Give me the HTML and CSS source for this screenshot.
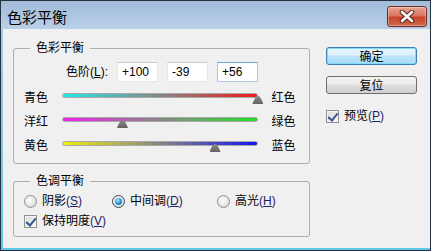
FILE: index.html
```html
<!DOCTYPE html>
<html lang="zh-CN">
<head>
    <meta charset="UTF-8">
    <title>色彩平衡</title>
    <link rel="stylesheet" href="styles.css">
</head>
<body>
    <div class="window">
        <div class="titlebar">
            <span class="title">色彩平衡</span>
            <button class="close-btn" title="关闭">
                <svg width="18" height="13" viewBox="0 0 18 13">
                    <path d="M4 2 L14 11 M14 2 L4 11" stroke="#5a2418" stroke-width="4.6" stroke-linecap="round"/>
                    <path d="M4 2 L14 11 M14 2 L4 11" stroke="#ffffff" stroke-width="2.6" stroke-linecap="round"/>
                </svg>
            </button>
        </div>
        <div class="frame">
            <div class="client">
                <div class="panes">
                    <div class="group balance">
                        <div class="group-title">色彩平衡</div>
                        <div class="levels">
                            <label class="levels-label">色阶(<u>L</u>):</label>
                            <input class="level-input" type="text" value="+100">
                            <input class="level-input" type="text" value="-39">
                            <input class="level-input focused" type="text" value="+56">
                        </div>
                        <div class="slider-row">
                            <span class="slider-name">青色</span>
                            <div class="track cyan-red"><span class="thumb" style="left: 100%"></span></div>
                            <span class="slider-name end">红色</span>
                        </div>
                        <div class="slider-row">
                            <span class="slider-name">洋红</span>
                            <div class="track magenta-green"><span class="thumb" style="left: 30.5%"></span></div>
                            <span class="slider-name end">绿色</span>
                        </div>
                        <div class="slider-row">
                            <span class="slider-name">黄色</span>
                            <div class="track yellow-blue"><span class="thumb" style="left: 78%"></span></div>
                            <span class="slider-name end">蓝色</span>
                        </div>
                    </div>

                    <div class="group tone">
                        <div class="group-title">色调平衡</div>
                        <div class="radio-row">
                            <span class="option"><span class="radio"></span>阴影<span class="key">(<u>S</u>)</span></span>
                            <span class="option"><span class="radio checked"></span>中间调<span class="key">(<u>D</u>)</span></span>
                            <span class="option"><span class="radio"></span>高光<span class="key">(<u>H</u>)</span></span>
                        </div>
                        <div class="check-row">
                            <span class="option"><span class="checkbox checked"></span>保持明度<span class="key">(<u>V</u>)</span></span>
                        </div>
                    </div>
                </div>

                <div class="actions">
                    <button class="btn btn-default">确定</button>
                    <button class="btn">复位</button>
                    <span class="option preview"><span class="checkbox checked"></span>预览<span class="key">(<u>P</u>)</span></span>
                </div>
            </div>
        </div>
    </div>
</body>
</html>
```
FILE: styles.css
```css
body {
    margin: 0;
    font-family: "Liberation Sans", "Noto Sans CJK SC", sans-serif;
    font-size: 12px;
    color: #000;
    background: #fff;
}
.window {
    width: 431px;
    height: 251px;
    box-sizing: border-box;
    border: 1px solid #24313f;
    display: flex;
    flex-direction: column;
    background: #8fc4e2;
}
.titlebar {
    height: 28px;
    flex: none;
    display: flex;
    align-items: center;
    justify-content: space-between;
    padding: 0 3px 0 6px;
    background: linear-gradient(#a1bbd8, #b9d0e8);
}
.title {
    font-family: "Noto Sans CJK SC", sans-serif;
    font-size: 15px;
    line-height: 18px;
    padding-top: 3px;
}
.close-btn {
    width: 40px;
    height: 21px;
    margin-top: 2px;
    padding: 0;
    border: 1px solid #6e2c20;
    border-radius: 3px;
    background: linear-gradient(#e9a593 0%, #d9745f 45%, #c5452c 55%, #cf6a4a 100%);
    box-shadow: inset 0 0 0 1px rgba(255,255,255,0.35);
    display: flex;
    align-items: center;
    justify-content: center;
}
.frame {
    flex: 1;
    display: flex;
    padding: 0 0 2px 2px;
    background: linear-gradient(to bottom, #a9c9e4, #5fc6e8);
}
.client {
    flex: 1;
    display: flex;
    align-items: flex-start;
    background: #f0f0f0;
    padding: 18px 0 0 10px;
}
.panes {
    width: 297px;
    padding-top: 1px;
    display: flex;
    flex-direction: column;
    gap: 17px;
}
.group {
    position: relative;
    border: 1px solid #adadad;
    border-radius: 3px;
}
.group-title {
    position: absolute;
    top: -9px;
    left: 16px;
    padding: 0 6px;
    line-height: 16px;
    background: #f0f0f0;
}
.balance {
    padding: 13px 0 5px 10px;
}
.levels {
    display: flex;
    align-items: center;
    gap: 9px;
    margin-left: -10px;
    margin-bottom: 4px;
}
.levels-label {
    width: 103px;
    box-sizing: border-box;
    margin-right: -9px;
    padding-right: 9px;
    text-align: right;
    line-height: 16px;
}
.level-input {
    width: 41px;
    height: 20px;
    box-sizing: border-box;
    margin: 0;
    padding: 0 4px;
    border: 1px solid #e3e6ec;
    border-top-color: #c9ccd3;
    background: #fff;
    font-family: "Liberation Sans", sans-serif;
    font-size: 12px;
    color: #000;
    outline: none;
}
.level-input.focused {
    border-color: #a4c8ec;
    border-top-color: #6ea2d2;
}
.slider-row {
    display: flex;
    align-items: flex-start;
    height: 24px;
}
.slider-name {
    width: 38px;
    line-height: 24px;
}
.slider-name.end {
    margin-left: 13px;
}
.track {
    position: relative;
    width: 199px;
    height: 5px;
    box-sizing: border-box;
    margin-top: 7px;
    border: 1px solid #a8a8a8;
    border-radius: 3px;
}
.cyan-red {
    background: linear-gradient(to right, #22e8e8, #868686 50%, #f41a1a);
}
.magenta-green {
    background: linear-gradient(to right, #ee22ee, #888888 50%, #22e022);
}
.yellow-blue {
    background: linear-gradient(to right, #eeee10, #858585 50%, #1414f2);
}
.thumb {
    position: absolute;
    top: 2px;
    width: 11px;
    height: 8px;
    margin-left: -5px;
    background: linear-gradient(#8c8c8c, #626262);
    clip-path: polygon(0 100%, 12% 60%, 28% 20%, 40% 2%, 50% 0, 60% 2%, 72% 20%, 88% 60%, 100% 100%);
}
.tone {
    padding: 11px 0 7px 10px;
}
.radio-row {
    display: grid;
    grid-template-columns: 88px 105px auto;
    height: 16px;
    margin-bottom: 4px;
}
.check-row {
    height: 16px;
}
.option {
    display: flex;
    align-items: center;
    gap: 5px;
    line-height: 16px;
    white-space: nowrap;
}
.key {
    margin-left: -5px;
    color: #1e1e66;
}
.radio {
    width: 13px;
    height: 13px;
    box-sizing: border-box;
    border: 1px solid #8e8f8f;
    border-radius: 50%;
    background: radial-gradient(circle at 40% 40%, #ffffff, #e4e4e4 60%, #cfcfcf);
    display: flex;
    align-items: center;
    justify-content: center;
}
.radio.checked {
    border-color: #3c4650;
}
.radio.checked::after {
    content: "";
    width: 7px;
    height: 7px;
    border-radius: 50%;
    background: radial-gradient(circle at 40% 35%, #b8f0ff, #2d9be0 45%, #0c4f94 100%);
}
.checkbox {
    width: 13px;
    height: 13px;
    box-sizing: border-box;
    border: 1px solid #8e8f8f;
    background: linear-gradient(135deg, #d8dadc, #f8f8f8);
    box-shadow: inset 0 0 0 1px #f6f6f6;
    position: relative;
}
.checkbox.checked::after {
    content: "";
    position: absolute;
    left: 3px;
    top: 0;
    width: 4px;
    height: 8px;
    border: solid #3a5590;
    border-width: 0 2px 2px 0;
    transform: rotate(40deg);
}
.actions {
    width: 91px;
    margin-left: 16px;
    display: flex;
    flex-direction: column;
}
.btn {
    height: 18px;
    box-sizing: border-box;
    margin: 0 0 11px;
    padding: 0;
    border: 1px solid #707070;
    border-radius: 3px;
    background: linear-gradient(#f3f3f3 0%, #ebebeb 45%, #dddddd 50%, #d0d0d0 100%);
    font-family: "Noto Sans CJK SC", sans-serif;
    font-size: 12px;
    line-height: 16px;
    color: #000;
}
.btn-default {
    border-color: #3c7fb1;
    background: linear-gradient(#eaf6fd 0%, #d9f0fc 45%, #bee6fd 50%, #a7d9f5 100%);
    box-shadow: inset 0 0 0 1px #7fdcf8;
}
.preview {
    margin-top: 3px;
}
```
